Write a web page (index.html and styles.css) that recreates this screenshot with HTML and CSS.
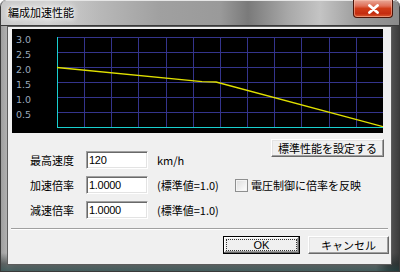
FILE: index.html
```html
<!DOCTYPE html>
<html lang="ja">
  <head>
    <meta charset="UTF-8" />
    <title>編成加速性能</title>
    <link rel="stylesheet" href="styles.css">
  </head>
  <body>
    <div class="window">
      <!-- Title bar -->
      <div class="titlebar">
        <span class="title">編成加速性能</span>
        <button class="close">
          <svg width="13" height="10" viewBox="0 0 13 10">
            <path d="M2.5 1.5 L10.5 8.5 M10.5 1.5 L2.5 8.5" stroke="#fff" stroke-width="2.8" stroke-linecap="round" />
          </svg>
        </button>
      </div>

      <div class="client">
        <!-- Graph -->
        <div class="chart">
          <svg width="371" height="104" viewBox="0 0 371 104">
            <rect width="371" height="104" fill="#000" />
            <g stroke="#34348c" stroke-width="1">
              <line x1="72.5" y1="8" x2="72.5" y2="98" />
              <line x1="99.5" y1="8" x2="99.5" y2="98" />
              <line x1="126.5" y1="8" x2="126.5" y2="98" />
              <line x1="154.5" y1="8" x2="154.5" y2="98" />
              <line x1="181.5" y1="8" x2="181.5" y2="98" />
              <line x1="208.5" y1="8" x2="208.5" y2="98" />
              <line x1="235.5" y1="8" x2="235.5" y2="98" />
              <line x1="262.5" y1="8" x2="262.5" y2="98" />
              <line x1="289.5" y1="8" x2="289.5" y2="98" />
              <line x1="317.5" y1="8" x2="317.5" y2="98" />
              <line x1="344.5" y1="8" x2="344.5" y2="98" />
              <line x1="45" y1="8.5" x2="371" y2="8.5" />
              <line x1="45" y1="23.5" x2="371" y2="23.5" />
              <line x1="45" y1="38.5" x2="371" y2="38.5" />
              <line x1="45" y1="53.5" x2="371" y2="53.5" />
              <line x1="45" y1="68.5" x2="371" y2="68.5" />
              <line x1="45" y1="83.5" x2="371" y2="83.5" />
            </g>
            <g stroke="#18d0d0" stroke-width="1">
              <line x1="45.5" y1="8" x2="45.5" y2="99" />
              <line x1="45" y1="98.5" x2="371" y2="98.5" />
            </g>
            <polyline points="45,38.5 190,52.6 204,53 371,97.6" fill="none" stroke="#e0e000" stroke-width="1.4" />
            <g class="axis-label">
              <text x="4" y="13.5">3.0</text>
              <text x="4" y="28.5">2.5</text>
              <text x="4" y="43.5">2.0</text>
              <text x="4" y="58.5">1.5</text>
              <text x="4" y="73.5">1.0</text>
              <text x="4" y="88.5">0.5</text>
            </g>
          </svg>
        </div>

        <!-- Settings -->
        <div class="controls">
          <div class="fields">
            <div class="row">
              <span class="label">最高速度</span>
              <input class="text-input" type="text" value="120" />
              <span class="unit">km/h</span>
            </div>
            <div class="row">
              <span class="label">加速倍率</span>
              <input class="text-input" type="text" value="1.0000" />
              <span class="unit">(標準値=1.0)</span>
            </div>
            <div class="row">
              <span class="label">減速倍率</span>
              <input class="text-input" type="text" value="1.0000" />
              <span class="unit">(標準値=1.0)</span>
            </div>
          </div>
          <div class="side">
            <button class="btn btn-wide">標準性能を設定する</button>
            <label class="check-row">
              <span class="checkbox"></span>
              <span>電圧制御に倍率を反映</span>
            </label>
          </div>
        </div>

        <div class="separator"></div>

        <div class="buttons">
          <button class="btn btn-ok"><span class="focus">OK</span></button>
          <button class="btn btn-cancel">キャンセル</button>
        </div>
      </div>
    </div>
  </body>
</html>
```

FILE: styles.css
```css
* {
  margin: 0;
  padding: 0;
  box-sizing: border-box;
}

body {
  width: 400px;
  height: 272px;
  overflow: hidden;
  background: #ffffff;
  font-family: "Noto Sans CJK JP", "Liberation Sans", sans-serif;
  font-size: 11px;
  color: #000;
}

.window {
  width: 400px;
  height: 272px;
  display: flex;
  flex-direction: column;
  border-radius: 6px 6px 0 0;
  background:
    linear-gradient(rgba(0, 0, 0, 0) 0%, rgba(0, 0, 0, 0) 93%, rgba(30, 40, 40, 0.55) 97%, rgba(20, 60, 60, 0.7) 100%),
    linear-gradient(90deg, #9c9c9c 0%, #b4b4b4 2%, #a8a8a8 4%, #a4a4a4 94%, #5a5a5a 97%, #3a3a3a 100%);
  box-shadow: inset 0 0 0 1px #3a3a3a;
  overflow: hidden;
}

.titlebar {
  height: 26px;
  display: flex;
  align-items: flex-start;
  padding-left: 8px;
  background: linear-gradient(90deg, #c9c9c9 0%, #d2d2d2 12%, #b8b8b8 25%, #a0a0a0 40%, #9a9a9a 55%, #7a7a7a 62%, #a8a8a8 72%, #c4c4c4 80%, #9a9a9a 90%, #8a8a8a 100%);
  border-radius: 6px 6px 0 0;
  box-shadow: inset 0 1px 0 #e6e6e6, inset 0 0 0 1px #3a3a3a;
}

.title {
  margin-top: 4px;
  font-size: 11px;
  line-height: 16px;
  color: #000;
  text-shadow: 0 0 4px #fff, 0 0 6px #fff, 0 0 8px #f0f0f0;
}

.close {
  margin-left: auto;
  margin-right: 7px;
  width: 40px;
  height: 18px;
  border: 1px solid #4a1408;
  border-top: none;
  border-radius: 0 0 4px 4px;
  background: linear-gradient(#e8a898 0%, #e07058 35%, #d03c18 50%, #c42c10 80%, #d85a30 100%);
  box-shadow: inset 0 0 0 1px rgba(255, 200, 180, 0.5);
  display: flex;
  align-items: center;
  justify-content: center;
}

.client {
  flex: 1;
  margin: 0 8px 7px 7px;
  border: 1px solid #5c5c5c;
  background: #f0f0f0;
  display: flex;
  flex-direction: column;
}

.chart {
  margin: 2px 8px 0 4px;
  height: 104px;
  line-height: 0;
}

.axis-label text {
  font-family: "DejaVu Sans", sans-serif;
  font-size: 9.5px;
  fill: #9aaabb;
}

.controls {
  display: flex;
}

.fields {
  width: 227px;
  padding: 18px 0 0 22px;
  display: flex;
  flex-direction: column;
  gap: 7px;
}

.row {
  height: 18px;
  display: flex;
  align-items: center;
}

.label {
  width: 56px;
}

.text-input {
  width: 62px;
  height: 18px;
  padding: 0 2px;
  border: 1px solid;
  border-color: #a0a0a0 #ffffff #ffffff #a0a0a0;
  box-shadow: inset 1px 1px 0 #696969, inset -1px -1px 0 #e3e3e3;
  background: #fff;
  font-family: "Liberation Sans", sans-serif;
  font-size: 11px;
  letter-spacing: -0.3px;
  outline: none;
}

.unit {
  margin-left: 9px;
  white-space: nowrap;
}

.side {
  flex: 1;
  padding-right: 7px;
  display: flex;
  flex-direction: column;
}

.btn {
  height: 18px;
  background: #f0f0f0;
  border: 1px solid;
  border-color: #ffffff #696969 #696969 #ffffff;
  box-shadow: inset -1px -1px 0 #a0a0a0, inset 1px 1px 0 #e3e3e3;
  font-family: "Noto Sans CJK JP", "Liberation Sans", sans-serif;
  font-size: 11px;
  color: #000;
  display: flex;
  align-items: center;
  justify-content: center;
}

.btn-wide {
  align-self: flex-end;
  width: 113px;
  margin-top: 6px;
}

.check-row {
  margin-top: 19px;
  height: 18px;
  display: flex;
  align-items: center;
  gap: 3px;
}

.checkbox {
  width: 13px;
  height: 13px;
  border: 1px solid #8e8f8f;
  background: linear-gradient(135deg, #dcdcdc, #ffffff);
  box-shadow: inset 0 0 0 1px #f4f4f4;
}

.separator {
  margin: 9px 3px 0 3px;
  border-top: 1px solid #a0a0a0;
  border-bottom: 1px solid #ffffff;
}

.buttons {
  margin-top: 6px;
  padding-right: 2px;
  display: flex;
  justify-content: flex-end;
  gap: 8px;
}

.btn-ok {
  width: 77px;
  border-color: #000;
  box-shadow: inset -1px -1px 0 #696969, inset 1px 1px 0 #ffffff, inset -2px -2px 0 #a0a0a0;
  padding: 2px;
}

.btn-ok .focus {
  width: 100%;
  height: 100%;
  border: 1px dotted #333;
  display: flex;
  align-items: center;
  justify-content: center;
  font-family: "Liberation Sans", sans-serif;
}

.btn-cancel {
  width: 81px;
}
```
